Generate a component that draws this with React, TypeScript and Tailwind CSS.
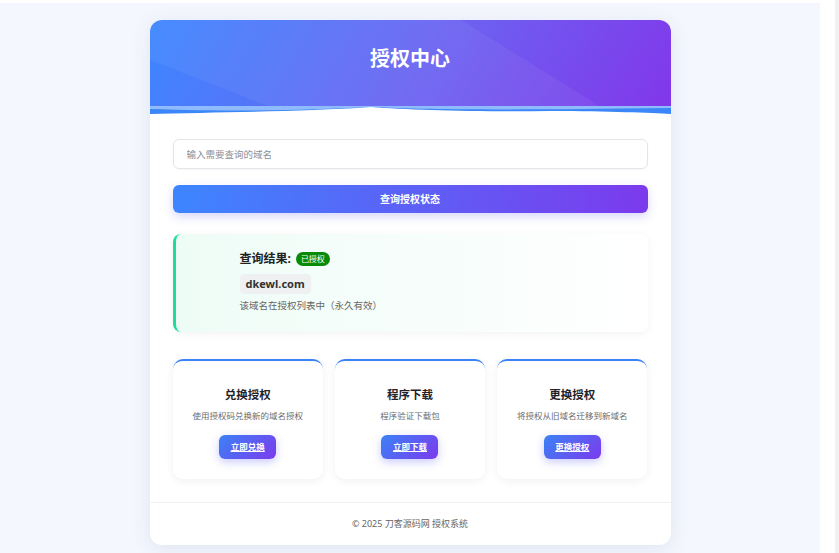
import React from "react";

const font = { fontFamily: '"Noto Sans", "Noto Sans CJK SC", sans-serif' };

function FeatureCard({ title, desc, btn }: { title: string; desc: string; btn: string }) {
  return (
    <div className="h-[120px] rounded-[10px] border-t-[2px] border-[#3b82f6] bg-white shadow-[0_2px_10px_rgba(0,0,0,0.06)] flex flex-col items-center">
      <div className="mt-[25px] text-[11.5px] leading-[18px] font-bold text-[#1f2329]">{title}</div>
      <div className="mt-[6px] text-[8.5px] leading-[12px] text-[#6b6b6b]">{desc}</div>
      <button className="mt-[13px] h-[24px] w-[57px] rounded-[6px] bg-[linear-gradient(135deg,#3b82f6,#7c3aed)] text-[8.5px] font-bold text-white underline shadow-[0_3px_8px_rgba(99,102,241,0.35)]">
        {btn}
      </button>
    </div>
  );
}

export default function App() {
  return (
    <div className="w-[839px] h-[553px] flex overflow-hidden bg-white" style={font}>
      <div className="w-[820px] pt-[3px] flex flex-col">
        <div className="flex-1 bg-[#f4f7fe] pt-[17px]">
          <div className="mx-auto w-[521px] h-[525px] rounded-[12px] bg-white overflow-hidden shadow-[0_4px_20px_rgba(60,70,120,0.10)] flex flex-col">
            <div className="relative h-[94px] bg-[linear-gradient(120deg,#3d86ff,#6a66f2_50%,#8236ea)] text-center">
              <svg className="absolute inset-0" width="521" height="94" viewBox="0 0 521 94">
                <polygon points="0,0 311,0 451,87 121,87 0,40" fill="white" opacity="0.05" />
              </svg>
              <div className="relative pt-[26px] text-[20px] leading-[26px] font-bold text-white">授权中心</div>
              <svg className="absolute left-0 bottom-0" width="521" height="8" viewBox="0 0 521 8" preserveAspectRatio="none">
                <rect x="0" y="0" width="521" height="8" fill="#8fbafb" />
                <path d="M0,3 C100,6 160,4 221,1 C280,4 380,4 521,2 L521,8 L0,8 Z" fill="#3b86f8" />
                <path d="M0,8 C60,6 150,6 221,1 C260,4 330,6 400,5 C460,5 500,7 521,8 Z" fill="#ffffff" />
              </svg>
            </div>
            <div className="px-[23px] pt-[25px]">
              <input
                className="w-full h-[30px] rounded-[6px] border border-[#e2e5ea] pl-[13px] text-[9.5px] text-[#333] placeholder:text-[#8a8f99] outline-none shadow-[0_1px_2px_rgba(0,0,0,0.03)]"
                placeholder="输入需要查询的域名"
              />
              <button className="mt-[16px] w-full h-[28px] rounded-[6px] bg-[linear-gradient(100deg,#3d86ff,#7c3aed)] text-[10px] font-bold text-white shadow-[0_4px_10px_rgba(99,102,241,0.25)]">
                查询授权状态
              </button>
              <div className="mt-[21px] h-[98px] rounded-[8px] border-l-[3px] border-[#1fdc9e] bg-[linear-gradient(90deg,#eefcf6,#ffffff)] shadow-[0_2px_10px_rgba(0,0,0,0.05)] pl-[64px] pt-[17px]">
                <div className="flex items-center h-[16px]">
                  <span className="text-[12px] font-bold text-[#222]">查询结果:</span>
                  <span className="ml-[5px] h-[14px] px-[5px] rounded-full bg-[#078a07] text-[8px] leading-[14px] text-white">已授权</span>
                </div>
                <div className="mt-[7px] inline-flex items-center h-[20px] px-[6px] rounded-[4px] bg-[#eef0f2] text-[11px] font-bold text-[#333]">
                  dkewl.com
                </div>
                <div className="mt-[5px] text-[9.5px] leading-[14px] text-[#666]">该域名在授权列表中（永久有效）</div>
              </div>
              <div className="mt-[27px] grid grid-cols-3 gap-[12px]">
                <FeatureCard title="兑换授权" desc="使用授权码兑换新的域名授权" btn="立即兑换" />
                <FeatureCard title="程序下载" desc="程序验证下载包" btn="立即下载" />
                <FeatureCard title="更换授权" desc="将授权从旧域名迁移到新域名" btn="更换授权" />
              </div>
            </div>
            <div className="mt-[23px] flex-1 border-t border-[#f0f1f4] flex items-center justify-center text-[9px] text-[#666]">
              © 2025 刀客源码网 授权系统
            </div>
          </div>
        </div>
      </div>
      <div className="w-[15px] bg-white" />
      <div className="w-[4px] bg-[#f1f1f1]" />
    </div>
  );
}
